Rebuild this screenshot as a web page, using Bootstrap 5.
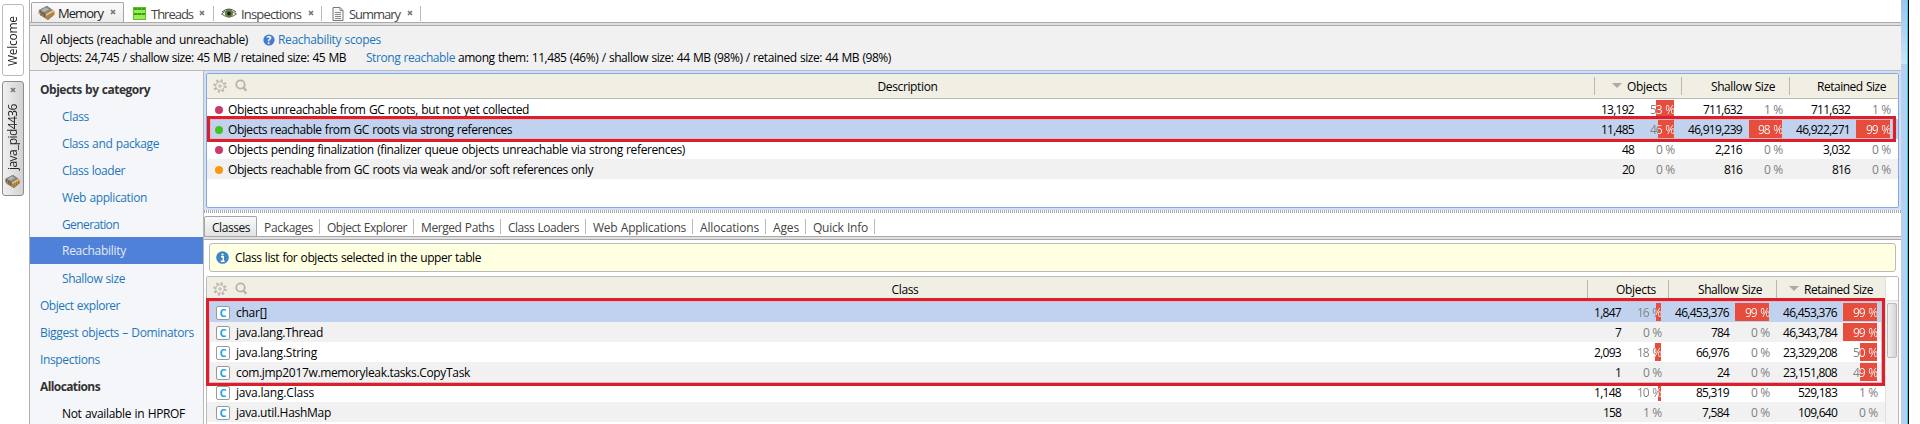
<!DOCTYPE html>
<html lang="en">
<head>
<meta charset="utf-8">
<title>Memory</title>
<link href="https://cdn.jsdelivr.net/npm/bootstrap@5.3.0/dist/css/bootstrap.min.css" rel="stylesheet">
<style>
body{font-family:"Open Sans","Noto Sans",sans-serif;font-size:12px;line-height:20px;color:#000;background:#fff;width:1920px;height:424px;overflow:hidden;word-spacing:.6px}
[data-w]{display:inline-block;white-space:pre;flex:none}
svg{flex:none;display:block}
.rail{width:29px;padding:4px 0 0 2px}
.vtab{width:22px;border:1px solid #bbb;border-radius:3px;writing-mode:vertical-rl;transform:rotate(180deg);font-size:12px;line-height:20px;display:flex;align-items:center;color:#222}
.vtab.on{background:linear-gradient(90deg,#d2d2d2,#f0f0f0);border-color:#8c8c8c}
.main-pane{width:1872px;border-left:1px solid #b0b0b0}
.tabs{height:22px;color:#444}
.tab-top{height:15px;margin-top:6px;border-right:1px solid #bbb;font-size:13px}
.tab-top.on{height:20px;margin-top:2px;border:1px solid #a5a5a5;border-bottom:0;background:linear-gradient(#f9f9f9,#ececec);border-radius:2px 2px 0 0;color:#222}
.rule{height:4px;background:#e0e0e0;border-top:1px solid #aaa;border-bottom:1px solid #aaa}
.info{height:45px;background:#f1f1f1;border-bottom:1px solid #b9b9b9;padding:5px 0 0 10px}
.info>div{height:18px;line-height:18px}
.lnk{color:#1d76bb}
.side{width:173px;background:#f5f6fa;padding-top:4px}
.side>div{height:27px;line-height:29px;padding-left:10px;color:#1d76bb}
.side>.sub{padding-left:32px}
.side>.head{font-weight:700;color:#333}
.side>.on{background:#4f81d8;color:#e2ebfa;line-height:27px}
.work{width:1698px;border-left:1px solid #b9b9b9}
.ring{height:139px;background:#cfe0f8;padding:2px}
.upper{border:1px solid #85a8e4;border-radius:2px;height:135px;background:#fff}
.split{height:3px;background:repeating-linear-gradient(90deg,#aaa 0 1px,#fff 1px 2px)}
.trow{display:grid;height:20px;line-height:21px}
.upper .trow{grid-template-columns:1fr 87px 108px 109px}
.lower .trow{grid-template-columns:1fr 81px 108px 109px}
.trow.alt{background:#f1f1f1}.trow.sel{background:#c1d2ee}
.thead-row{height:25px!important;background:#f1efe4;border-bottom:1px solid #bbb;position:relative}
.thead-row .hc{border-left:1px solid #b8b7b0;height:18px;margin-top:3px;display:flex;justify-content:flex-end;align-items:center;padding-right:14px}
.thead-row .hc.tight{padding-right:12px}
.tools{position:absolute;left:6px;top:5px}
.tri{border:5px solid transparent;border-top-color:#aaa;border-bottom:0;margin-right:5px;margin-top:-2px}
.cell{display:flex;justify-content:flex-end;padding-right:7px}
.cell:last-child{padding-right:8px}
.pct{width:34px;margin-left:6px;position:relative;color:#808080;text-align:right;height:20px;word-spacing:1.8px}
.pct [data-w]{position:relative}
.pct .split-ink{-webkit-background-clip:text;background-clip:text;-webkit-text-fill-color:transparent}
.bar{position:absolute;right:0;top:1px;height:18px;background:#e64d3d}
.dot{width:8px;height:8px;border-radius:50%;margin:0 5px 0 8px}
.mark-box{position:absolute;border:3px solid #d7222b;box-shadow:inset 0 0 0 1px #e7b3c4}
.tab-low{height:15px;margin-top:6px;border-right:1px solid #bbb;padding:0 6px 0 7px;line-height:17px;color:#444}
.tab-low.on{height:20px;margin-top:3px;line-height:22px;border:1px solid #a5a5a5;border-bottom:0;background:linear-gradient(#fafafa,#e2e2e2);color:#111;border-radius:2px 2px 0 0}
.banner{margin:3px 5px 0 5px;height:29px;border:1px solid #bbb;border-radius:3px;background:#ffffe1}
.lower{margin:4px 2px 0 2px;border:1px solid #bbb;border-radius:2px;height:160px;position:relative}
.cicon{width:14px;height:14px;border:1px solid #999;border-radius:2px;color:#15a3e8;font-weight:700;font-size:11px;line-height:12px;text-align:center;margin:0 6px 0 9px;background:#fff;flex:none}
.scroll{width:13px;border-left:1px solid #e0e0e0;background:#f4f4f4}
.thumb{height:55px;margin:0 1px;border:1px solid #bbb;border-radius:2px;background:linear-gradient(90deg,#f2f2f2,#d4d4d4)}
.edge{width:8px;background:linear-gradient(#9cc3ea,#cfe4f7 64px,#b5d1ed 64px);border-right:1px solid #000;box-shadow:inset -1px 0 #36c9ee}
</style>
</head>
<body>
<svg width="0" height="0" class="position-absolute">
<defs>
<symbol id="chip" viewBox="0 0 17 16"><path d="M1 5 9 1l7 5v4l-6 5-8-5z" fill="#5d5e5b"/><path d="M1 5 9 1l7 5-7 4z" fill="#868783"/><path d="M3 5 8 2.500l3 2L6 7z" fill="#b4b5b1"/><path d="M8 10v4M10 9.500v4.500M12 8v5M14 7v4.500M16 6v4" stroke="#d9963e" stroke-width="1.300"/><path d="M8 10l8-4.500" stroke="#f3c481" stroke-width="1.500"/><path d="M1 6v3M3 7v4M5 9v3" stroke="#c98a45"/></symbol>
<symbol id="x" viewBox="0 0 6 6"><path d="M1 1l4 4M5 1 1 5" stroke="#777" stroke-width="1.700"/></symbol>
<symbol id="gear" viewBox="0 0 14 14"><g fill="none" stroke="#b5b3ab"><circle cx="7" cy="7" r="4.300"/><circle cx="7" cy="7" r="1.200"/><circle cx="7" cy="7" r="5.700" stroke-width="2" stroke-dasharray="2 2.477"/></g></symbol>
<symbol id="find" viewBox="0 0 13 13"><circle cx="5.500" cy="5.500" r="4.200" fill="none" stroke="#b5b3ab" stroke-width="1.800"/><path d="M8.300 8.500l3 3.300" stroke="#b5b3ab" stroke-width="2.400"/></symbol>
</defs></svg>
<div class="d-flex h-100">
  <div class="rail flex-shrink-0">
    <div class="vtab" style="height:72px;padding-top:9px"><span data-w="50">Welcome</span></div>
    <div class="vtab on" style="height:115px;margin-top:5px;padding-top:6px"><svg width="17" height="15" style="transform:rotate(180deg)"><use href="#chip"/></svg><span data-w="66" style="margin-top:4px">java_pid4436</span><svg width="6" height="6" style="margin-top:11px"><use href="#x"/></svg></div>
  </div>
  <div class="main-pane flex-shrink-0">
    <div class="tabs d-flex">
      <div class="tab-top on d-flex align-items-center" style="width:93px;margin-left:1px;padding-left:6px"><svg width="17" height="16"><use href="#chip"/></svg><span data-w="45" style="margin-left:3px">Memory</span><svg width="6" height="6" style="margin-left:7px;margin-top:-2px"><use href="#x"/></svg></div>
      <div class="tab-top d-flex align-items-center" style="width:90px;padding-left:9px"><svg width="13" height="13"><path fill="#55c51d" d="M0 0h13v13H0z"/><path fill="#9bea59" d="M1 3h11v3H1zM1 8h11v4H1z"/><path d="M1 2h11M1 7h11" stroke="#197d10" stroke-dasharray="3 1"/></svg><span data-w="42" style="margin-left:5px">Threads</span><svg width="6" height="6" style="margin-left:6px;margin-top:-2px"><use href="#x"/></svg></div>
      <div class="tab-top d-flex align-items-center" style="width:108px;padding-left:7px"><svg width="16" height="12"><path d="M.5 6Q7-.5 15.500 6 8 12 .5 6z" fill="#eef0e5" stroke="#687056"/><circle cx="8" cy="5.500" r="4" fill="#638048"/><circle cx="8" cy="5.500" r="1.900" fill="#17230e"/><path d="M1 4Q8-2 15 4" fill="none" stroke="#444c37"/></svg><span data-w="60" style="margin-left:4px">Inspections</span><svg width="6" height="6" style="margin-left:7px;margin-top:-2px"><use href="#x"/></svg></div>
      <div class="tab-top d-flex align-items-center" style="width:99px;padding-left:10px"><svg width="12" height="14"><path d="M1 .5h7l3 3v10H1z" fill="#f7f7f7" stroke="#777"/><path d="M8 .5v3h3M3 5.500h6M3 7.500h6M3 9.500h6M3 11.500h6" stroke="#888" fill="none"/></svg><span data-w="51" style="margin-left:5px">Summary</span><svg width="6" height="6" style="margin-left:7px;margin-top:-2px"><use href="#x"/></svg></div>
    </div>
    <div class="rule"></div>
    <div class="info">
      <div class="d-flex align-items-center"><span data-w="208">All objects (reachable and unreachable)</span><svg width="12" height="12" style="margin:0 3px 0 15px"><circle cx="6" cy="6" r="5.600" fill="#467bd0"/><text x="6" y="9.600" text-anchor="middle" font-size="10" font-weight="700" fill="#fff">?</text></svg><span class="lnk" data-w="103">Reachability scopes</span></div>
      <div class="d-flex"><span data-w="306">Objects: 24,745 / shallow size: 45 MB / retained size: 45 MB</span><span class="lnk" data-w="89" style="margin-left:20px">Strong reachable</span><span data-w="433" style="margin-left:3px">among them: 11,485 (46%) / shallow size: 44 MB (98%) / retained size: 44 MB (98%)</span></div>
    </div>
    <div class="d-flex" style="height:353px">
      <div class="side flex-shrink-0">
        <div class="head"><span data-w="110">Objects by category</span></div>
        <div class="sub"><span data-w="27">Class</span></div>
        <div class="sub"><span data-w="97">Class and package</span></div>
        <div class="sub"><span data-w="63">Class loader</span></div>
        <div class="sub"><span data-w="85">Web application</span></div>
        <div class="sub"><span data-w="57">Generation</span></div>
        <div class="sub on"><span data-w="64">Reachability</span></div>
        <div class="sub"><span data-w="63">Shallow size</span></div>
        <div><span data-w="80">Object explorer</span></div>
        <div><span data-w="154">Biggest objects – Dominators</span></div>
        <div><span data-w="60">Inspections</span></div>
        <div class="head"><span data-w="60">Allocations</span></div>
        <div class="sub text-black"><span data-w="123">Not available in HPROF</span></div>
      </div>
      <div class="work flex-shrink-0">
        <div class="ring position-relative">
          <div class="upper" id="upper">
            <div class="trow thead-row"><div class="tools d-flex"><svg width="14" height="14"><use href="#gear"/></svg><svg width="13" height="13" style="margin-left:8px"><use href="#find"/></svg></div><div class="text-center" style="padding:2px 0 0 14px"><span data-w="60">Description</span></div><div class="hc"><i class="tri"></i><span data-w="40">Objects</span></div><div class="hc"><span data-w="64">Shallow Size</span></div><div class="hc tight"><span data-w="69">Retained Size</span></div></div>
          </div>
          <div class="mark-box" style="left:3px;top:45px;width:1689px;height:26px"></div>
        </div>
        <div class="split"></div>
        <div class="d-flex" style="height:23px">
          <div class="tab-low on"><span data-w="38">Classes</span></div>
          <div class="tab-low"><span data-w="49">Packages</span></div>
          <div class="tab-low"><span data-w="80">Object Explorer</span></div>
          <div class="tab-low"><span data-w="73">Merged Paths</span></div>
          <div class="tab-low"><span data-w="71">Class Loaders</span></div>
          <div class="tab-low"><span data-w="93">Web Applications</span></div>
          <div class="tab-low"><span data-w="59">Allocations</span></div>
          <div class="tab-low"><span data-w="26">Ages</span></div>
          <div class="tab-low"><span data-w="55">Quick Info</span></div>
        </div>
        <div class="rule"></div>
        <div class="banner d-flex align-items-center"><svg width="13" height="13" style="margin:0 6px 0 6px"><circle cx="6.500" cy="6.500" r="6.300" fill="#3f86c6"/><circle cx="6.500" cy="3.500" r="1.100" fill="#fff"/><path d="M5 5.800h2.300V10M4.800 10.200h3.800" stroke="#fff" stroke-width="1.400" fill="none"/></svg><span data-w="246">Class list for objects selected in the upper table</span></div>
        <div class="lower">
          <div class="d-flex h-100 overflow-hidden">
          <div class="flex-grow-1" id="lower">
            <div class="trow thead-row"><div class="tools d-flex"><svg width="14" height="14"><use href="#gear"/></svg><svg width="13" height="13" style="margin-left:8px"><use href="#find"/></svg></div><div class="text-center" style="padding:2px 0 0 16px"><span data-w="27">Class</span></div><div class="hc tight"><span data-w="40">Objects</span></div><div class="hc"><span data-w="64">Shallow Size</span></div><div class="hc tight"><i class="tri"></i><span data-w="69">Retained Size</span></div></div>
          </div>
          <div class="scroll"><div class="bg-white border-bottom" style="height:24px;margin-bottom:2px"></div><div class="thumb"></div></div>
          </div>
          <div class="mark-box" style="left:-1px;top:21px;width:1679px;height:88px"></div>
        </div>
      </div>
    </div>
  </div>
  <div class="edge flex-shrink-0"></div>
</div>
<script src="https://cdn.jsdelivr.net/npm/bootstrap@5.3.0/dist/js/bootstrap.bundle.min.js"></script>
<script>
// label, label width, colour or null for a class, three pairs of value and percent
const scopes=[
 ["Objects unreachable from GC roots, but not yet collected",301,"#cc3a6b","13,192",53,"711,632",1,"711,632",1],
 ["Objects reachable from GC roots via strong references",284,"#43c31c","11,485",46,"46,919,239",98,"46,922,271",99],
 ["Objects pending finalization (finalizer queue objects unreachable via strong references)",457,"#cc3a6b","48",0,"2,216",0,"3,032",0],
 ["Objects reachable from GC roots via weak and/or soft references only",365,"#fb960f","20",0,"816",0,"816",0]];
const classes=[
 ["char[]",31,null,"1,847",16,"46,453,376",99,"46,453,376",99],
 ["java.lang.Thread",87,null,"7",0,"784",0,"46,343,784",99],
 ["java.lang.String",81,null,"2,093",18,"66,976",0,"23,329,208",50],
 ["com.jmp2017w.memoryleak.tasks.CopyTask",234,null,"1",0,"24",0,"23,151,808",49],
 ["java.lang.Class",78,null,"1,148",10,"85,319",0,"529,183",1],
 ["java.util.HashMap",95,null,"158",1,"7,584",0,"109,640",0]];
function cell(v,p){
  const digits=v.replace(/,/g,"").length, w=digits*6+(v.length-digits)*3;
  const b=p===16?5:p===18?6:Math.round(p*.34);
  const ink=p>1?` class="split-ink" style="background-image:linear-gradient(to left,#fff ${b}px,#808080 ${b}px)"`:"";
  return `<div class="cell"><span data-w="${w}">${v}</span><div class="pct">${p>1?`<div class="bar" style="width:${b}px"></div>`:""}<span data-w="${p>9?24:18}"${ink}>${p} %</span></div></div>`;
}
function fill(id,rows,sel){
  document.getElementById(id).insertAdjacentHTML("beforeend",rows.map((r,i)=>
   `<div class="trow ${i==sel?"sel":i%2?"alt":""}"><div class="d-flex align-items-center">${r[2]?`<i class="dot" style="background:${r[2]}"></i>`:`<span class="cicon">C</span>`}<span data-w="${r[1]}">${r[0]}</span></div>${cell(r[3],r[4])}${cell(r[5],r[6])}${cell(r[7],r[8])}</div>`).join(""));
}
fill("upper",scopes,1);
fill("lower",classes,0);
document.querySelectorAll("[data-w]").forEach(e=>{
  const w=+e.dataset.w, v=e.closest(".vtab"), n=v?e.offsetHeight:e.getBoundingClientRect().width;
  e.style.letterSpacing=((w-n)/e.textContent.length).toFixed(3)+"px";
});
</script>
</body>
</html>
